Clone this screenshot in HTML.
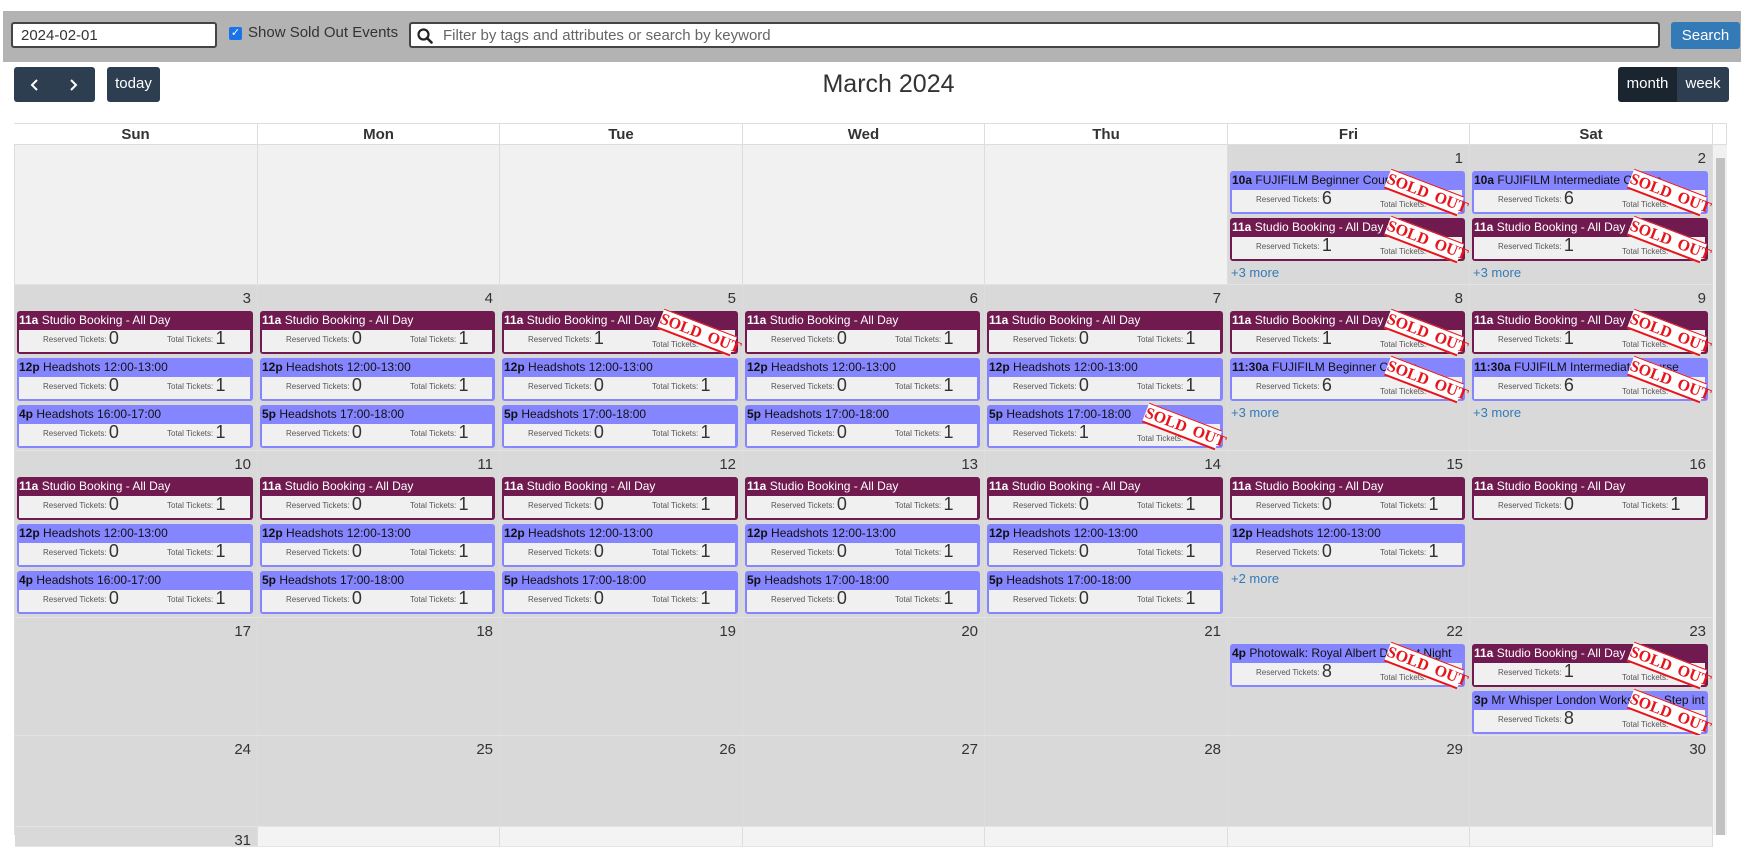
<!DOCTYPE html>
<html><head><meta charset="utf-8"><style>
*{box-sizing:border-box;margin:0;padding:0}
body{width:1741px;height:835px;overflow:hidden;background:#fff;font-family:"Liberation Sans",sans-serif;color:#333;position:relative}
.bar{position:absolute;left:3px;top:11px;width:1738px;height:51px;background:#b3b3b3}
.inp{position:absolute;background:#fff;border:2px solid #444;border-radius:3px;font-size:15px;color:#333}
.btn{position:absolute;background:#2c3e50;color:#fff;border-radius:3px;font-size:15px;text-align:center}
.cell{position:absolute;border-right:1px solid #ddd;border-bottom:1px solid #e4e4e4;overflow:hidden}
.g{background:#d9d9d9}.o{background:#f1f1f1}.w{background:#f3f3f3}
.num{text-align:right;font-size:15px;padding:5px 6px 0 0;height:26px;color:#333}
.ev{position:relative;margin:0 4px 4px 2px;border-radius:3px;padding:0 3px 0 2px;height:43px}
.p{background:#701a4f;color:#fff}.b{background:#8585ff;color:#111}
.t{font-size:12px;height:19px;line-height:19px;white-space:nowrap;overflow:hidden;padding-left:0}
.in{background:#f0f0f0;height:22px;color:#555;font-size:8px;white-space:nowrap;position:relative}
.in .a{position:absolute;left:24px;bottom:3px}
.in .c{position:absolute;left:148px;bottom:3px}
.n{font-size:18px;color:#333;vertical-align:-2px}
.so{position:absolute;right:2px;top:11px;width:78px;height:21px;background:#fff;color:#e8141b;font-family:"Liberation Serif",serif;font-weight:bold;font-size:16px;line-height:20px;text-align:center;transform:rotate(21deg);white-space:nowrap;border-top:1px solid #e8141b;border-bottom:2px solid #e8141b;word-spacing:3px}
.more{font-size:13px;color:#337ab7;padding-left:3px}
.hd{position:absolute;top:123px;height:22px;font-weight:bold;font-size:15px;text-align:center;line-height:21px;border-right:1px solid #ddd;border-top:1px solid #ddd;border-bottom:1px solid #ddd;background:#fff}
</style></head><body>
<div class="bar"></div>
<div class="inp" style="left:11px;top:22px;width:206px;height:26px;padding:2px 8px;line-height:19px">2024-02-01</div>
<div style="position:absolute;left:229px;top:27px;width:13px;height:13px;background:#1a73e8;border-radius:2px;color:#fff;font-size:11px;line-height:13px;text-align:center">✓</div>
<div style="position:absolute;left:248px;top:24px;font-size:15px;color:#333">Show Sold Out Events</div>
<div class="inp" style="left:409px;top:22px;width:1251px;height:26px;padding:2px 0 0 32px;line-height:19px;color:#666">Filter by tags and attributes or search by keyword</div>
<svg style="position:absolute;left:417px;top:28px" width="16" height="16" viewBox="0 0 16 16"><circle cx="6.5" cy="6.5" r="5" fill="none" stroke="#222" stroke-width="2.2"/><path d="M10 10l4.5 4.5" stroke="#222" stroke-width="2.6" stroke-linecap="round"/></svg>
<div style="position:absolute;left:1671px;top:22px;width:69px;height:27px;background:#337ab7;color:#fff;border-radius:3px;font-size:15px;text-align:center;line-height:27px">Search</div>
<div class="btn" style="left:14px;top:67px;width:81px;height:35px;"><svg style="position:absolute;left:16px;top:12px" width="10" height="12" viewBox="0 0 10 12"><path d="M7 1L2 6l5 5" fill="none" stroke="#fff" stroke-width="2"/></svg><svg style="position:absolute;left:54px;top:12px" width="10" height="12" viewBox="0 0 10 12"><path d="M3 1l5 5-5 5" fill="none" stroke="#fff" stroke-width="2"/></svg></div>
<div class="btn" style="left:107px;top:67px;width:53px;height:35px;line-height:34px">today</div>
<div style="position:absolute;left:0;width:1777px;top:70px;text-align:center;font-size:25px;color:#333">March 2024</div>
<div class="btn" style="left:1618px;top:67px;width:59px;height:35px;line-height:34px;background:#1a252f;border-radius:3px 0 0 3px">month</div>
<div class="btn" style="left:1677px;top:67px;width:52px;height:35px;line-height:34px;border-radius:0 3px 3px 0">week</div>
<div style="position:absolute;left:14px;top:123px;width:1px;height:712px;background:#ddd"></div>
<div class="hd" style="left:14px;width:244px">Sun</div>
<div class="hd" style="left:258px;width:242px">Mon</div>
<div class="hd" style="left:500px;width:243px">Tue</div>
<div class="hd" style="left:743px;width:242px">Wed</div>
<div class="hd" style="left:985px;width:243px">Thu</div>
<div class="hd" style="left:1228px;width:242px">Fri</div>
<div class="hd" style="left:1470px;width:243px">Sat</div>
<div style="position:absolute;left:1713px;top:123px;width:14px;height:22px;border:1px solid #ddd;border-left:0"></div>
<div style="position:absolute;left:1713px;top:145px;width:14px;height:690px;background:#f1f1f1"></div>
<div style="position:absolute;left:1716px;top:158px;width:9px;height:677px;background:#c1c1c1"></div>

<!-- Row 1 -->
<div class="cell o" style="left:15px;top:145px;width:243px;height:140px"></div>
<div class="cell o" style="left:258px;top:145px;width:242px;height:140px"></div>
<div class="cell o" style="left:500px;top:145px;width:243px;height:140px"></div>
<div class="cell o" style="left:743px;top:145px;width:242px;height:140px"></div>
<div class="cell o" style="left:985px;top:145px;width:243px;height:140px"></div>
<div class="cell g" style="left:1228px;top:145px;width:242px;height:140px"><div class="num">1</div>
<div class="ev b"><div class="t"><b>10a</b> FUJIFILM Beginner Course</div><div class="in"><span class="a">Reserved Tickets: <span class="n">6</span></span><span class="c">Total Tickets:</span></div><div class="so">SOLD OUT</div></div>
<div class="ev p"><div class="t"><b>11a</b> Studio Booking - All Day</div><div class="in"><span class="a">Reserved Tickets: <span class="n">1</span></span><span class="c">Total Tickets:</span></div><div class="so">SOLD OUT</div></div>
<div class="more">+3 more</div></div>
<div class="cell g" style="left:1470px;top:145px;width:243px;height:140px"><div class="num">2</div>
<div class="ev b"><div class="t"><b>10a</b> FUJIFILM Intermediate Course</div><div class="in"><span class="a">Reserved Tickets: <span class="n">6</span></span><span class="c">Total Tickets:</span></div><div class="so">SOLD OUT</div></div>
<div class="ev p"><div class="t"><b>11a</b> Studio Booking - All Day</div><div class="in"><span class="a">Reserved Tickets: <span class="n">1</span></span><span class="c">Total Tickets:</span></div><div class="so">SOLD OUT</div></div>
<div class="more">+3 more</div></div>

<!-- Row 2 -->
<div class="cell g" style="left:15px;top:285px;width:243px;height:166px"><div class="num">3</div>
<div class="ev p"><div class="t"><b>11a</b> Studio Booking - All Day</div><div class="in"><span class="a">Reserved Tickets: <span class="n">0</span></span><span class="c">Total Tickets: <span class="n">1</span></span></div></div>
<div class="ev b"><div class="t"><b>12p</b> Headshots 12:00-13:00</div><div class="in"><span class="a">Reserved Tickets: <span class="n">0</span></span><span class="c">Total Tickets: <span class="n">1</span></span></div></div>
<div class="ev b"><div class="t"><b>4p</b> Headshots 16:00-17:00</div><div class="in"><span class="a">Reserved Tickets: <span class="n">0</span></span><span class="c">Total Tickets: <span class="n">1</span></span></div></div></div>
<div class="cell g" style="left:258px;top:285px;width:242px;height:166px"><div class="num">4</div>
<div class="ev p"><div class="t"><b>11a</b> Studio Booking - All Day</div><div class="in"><span class="a">Reserved Tickets: <span class="n">0</span></span><span class="c">Total Tickets: <span class="n">1</span></span></div></div>
<div class="ev b"><div class="t"><b>12p</b> Headshots 12:00-13:00</div><div class="in"><span class="a">Reserved Tickets: <span class="n">0</span></span><span class="c">Total Tickets: <span class="n">1</span></span></div></div>
<div class="ev b"><div class="t"><b>5p</b> Headshots 17:00-18:00</div><div class="in"><span class="a">Reserved Tickets: <span class="n">0</span></span><span class="c">Total Tickets: <span class="n">1</span></span></div></div></div>
<div class="cell g" style="left:500px;top:285px;width:243px;height:166px"><div class="num">5</div>
<div class="ev p"><div class="t"><b>11a</b> Studio Booking - All Day</div><div class="in"><span class="a">Reserved Tickets: <span class="n">1</span></span><span class="c">Total Tickets:</span></div><div class="so">SOLD OUT</div></div>
<div class="ev b"><div class="t"><b>12p</b> Headshots 12:00-13:00</div><div class="in"><span class="a">Reserved Tickets: <span class="n">0</span></span><span class="c">Total Tickets: <span class="n">1</span></span></div></div>
<div class="ev b"><div class="t"><b>5p</b> Headshots 17:00-18:00</div><div class="in"><span class="a">Reserved Tickets: <span class="n">0</span></span><span class="c">Total Tickets: <span class="n">1</span></span></div></div></div>
<div class="cell g" style="left:743px;top:285px;width:242px;height:166px"><div class="num">6</div>
<div class="ev p"><div class="t"><b>11a</b> Studio Booking - All Day</div><div class="in"><span class="a">Reserved Tickets: <span class="n">0</span></span><span class="c">Total Tickets: <span class="n">1</span></span></div></div>
<div class="ev b"><div class="t"><b>12p</b> Headshots 12:00-13:00</div><div class="in"><span class="a">Reserved Tickets: <span class="n">0</span></span><span class="c">Total Tickets: <span class="n">1</span></span></div></div>
<div class="ev b"><div class="t"><b>5p</b> Headshots 17:00-18:00</div><div class="in"><span class="a">Reserved Tickets: <span class="n">0</span></span><span class="c">Total Tickets: <span class="n">1</span></span></div></div></div>
<div class="cell g" style="left:985px;top:285px;width:243px;height:166px"><div class="num">7</div>
<div class="ev p"><div class="t"><b>11a</b> Studio Booking - All Day</div><div class="in"><span class="a">Reserved Tickets: <span class="n">0</span></span><span class="c">Total Tickets: <span class="n">1</span></span></div></div>
<div class="ev b"><div class="t"><b>12p</b> Headshots 12:00-13:00</div><div class="in"><span class="a">Reserved Tickets: <span class="n">0</span></span><span class="c">Total Tickets: <span class="n">1</span></span></div></div>
<div class="ev b"><div class="t"><b>5p</b> Headshots 17:00-18:00</div><div class="in"><span class="a">Reserved Tickets: <span class="n">1</span></span><span class="c">Total Tickets:</span></div><div class="so">SOLD OUT</div></div></div>
<div class="cell g" style="left:1228px;top:285px;width:242px;height:166px"><div class="num">8</div>
<div class="ev p"><div class="t"><b>11a</b> Studio Booking - All Day</div><div class="in"><span class="a">Reserved Tickets: <span class="n">1</span></span><span class="c">Total Tickets:</span></div><div class="so">SOLD OUT</div></div>
<div class="ev b"><div class="t"><b>11:30a</b> FUJIFILM Beginner Course</div><div class="in"><span class="a">Reserved Tickets: <span class="n">6</span></span><span class="c">Total Tickets:</span></div><div class="so">SOLD OUT</div></div>
<div class="more">+3 more</div></div>
<div class="cell g" style="left:1470px;top:285px;width:243px;height:166px"><div class="num">9</div>
<div class="ev p"><div class="t"><b>11a</b> Studio Booking - All Day</div><div class="in"><span class="a">Reserved Tickets: <span class="n">1</span></span><span class="c">Total Tickets:</span></div><div class="so">SOLD OUT</div></div>
<div class="ev b"><div class="t"><b>11:30a</b> FUJIFILM Intermediate Course</div><div class="in"><span class="a">Reserved Tickets: <span class="n">6</span></span><span class="c">Total Tickets:</span></div><div class="so">SOLD OUT</div></div>
<div class="more">+3 more</div></div>

<!-- Row 3 -->
<div class="cell g" style="left:15px;top:451px;width:243px;height:167px"><div class="num">10</div>
<div class="ev p"><div class="t"><b>11a</b> Studio Booking - All Day</div><div class="in"><span class="a">Reserved Tickets: <span class="n">0</span></span><span class="c">Total Tickets: <span class="n">1</span></span></div></div>
<div class="ev b"><div class="t"><b>12p</b> Headshots 12:00-13:00</div><div class="in"><span class="a">Reserved Tickets: <span class="n">0</span></span><span class="c">Total Tickets: <span class="n">1</span></span></div></div>
<div class="ev b"><div class="t"><b>4p</b> Headshots 16:00-17:00</div><div class="in"><span class="a">Reserved Tickets: <span class="n">0</span></span><span class="c">Total Tickets: <span class="n">1</span></span></div></div></div>
<div class="cell g" style="left:258px;top:451px;width:242px;height:167px"><div class="num">11</div>
<div class="ev p"><div class="t"><b>11a</b> Studio Booking - All Day</div><div class="in"><span class="a">Reserved Tickets: <span class="n">0</span></span><span class="c">Total Tickets: <span class="n">1</span></span></div></div>
<div class="ev b"><div class="t"><b>12p</b> Headshots 12:00-13:00</div><div class="in"><span class="a">Reserved Tickets: <span class="n">0</span></span><span class="c">Total Tickets: <span class="n">1</span></span></div></div>
<div class="ev b"><div class="t"><b>5p</b> Headshots 17:00-18:00</div><div class="in"><span class="a">Reserved Tickets: <span class="n">0</span></span><span class="c">Total Tickets: <span class="n">1</span></span></div></div></div>
<div class="cell g" style="left:500px;top:451px;width:243px;height:167px"><div class="num">12</div>
<div class="ev p"><div class="t"><b>11a</b> Studio Booking - All Day</div><div class="in"><span class="a">Reserved Tickets: <span class="n">0</span></span><span class="c">Total Tickets: <span class="n">1</span></span></div></div>
<div class="ev b"><div class="t"><b>12p</b> Headshots 12:00-13:00</div><div class="in"><span class="a">Reserved Tickets: <span class="n">0</span></span><span class="c">Total Tickets: <span class="n">1</span></span></div></div>
<div class="ev b"><div class="t"><b>5p</b> Headshots 17:00-18:00</div><div class="in"><span class="a">Reserved Tickets: <span class="n">0</span></span><span class="c">Total Tickets: <span class="n">1</span></span></div></div></div>
<div class="cell g" style="left:743px;top:451px;width:242px;height:167px"><div class="num">13</div>
<div class="ev p"><div class="t"><b>11a</b> Studio Booking - All Day</div><div class="in"><span class="a">Reserved Tickets: <span class="n">0</span></span><span class="c">Total Tickets: <span class="n">1</span></span></div></div>
<div class="ev b"><div class="t"><b>12p</b> Headshots 12:00-13:00</div><div class="in"><span class="a">Reserved Tickets: <span class="n">0</span></span><span class="c">Total Tickets: <span class="n">1</span></span></div></div>
<div class="ev b"><div class="t"><b>5p</b> Headshots 17:00-18:00</div><div class="in"><span class="a">Reserved Tickets: <span class="n">0</span></span><span class="c">Total Tickets: <span class="n">1</span></span></div></div></div>
<div class="cell g" style="left:985px;top:451px;width:243px;height:167px"><div class="num">14</div>
<div class="ev p"><div class="t"><b>11a</b> Studio Booking - All Day</div><div class="in"><span class="a">Reserved Tickets: <span class="n">0</span></span><span class="c">Total Tickets: <span class="n">1</span></span></div></div>
<div class="ev b"><div class="t"><b>12p</b> Headshots 12:00-13:00</div><div class="in"><span class="a">Reserved Tickets: <span class="n">0</span></span><span class="c">Total Tickets: <span class="n">1</span></span></div></div>
<div class="ev b"><div class="t"><b>5p</b> Headshots 17:00-18:00</div><div class="in"><span class="a">Reserved Tickets: <span class="n">0</span></span><span class="c">Total Tickets: <span class="n">1</span></span></div></div></div>
<div class="cell g" style="left:1228px;top:451px;width:242px;height:167px"><div class="num">15</div>
<div class="ev p"><div class="t"><b>11a</b> Studio Booking - All Day</div><div class="in"><span class="a">Reserved Tickets: <span class="n">0</span></span><span class="c">Total Tickets: <span class="n">1</span></span></div></div>
<div class="ev b"><div class="t"><b>12p</b> Headshots 12:00-13:00</div><div class="in"><span class="a">Reserved Tickets: <span class="n">0</span></span><span class="c">Total Tickets: <span class="n">1</span></span></div></div>
<div class="more">+2 more</div></div>
<div class="cell g" style="left:1470px;top:451px;width:243px;height:167px"><div class="num">16</div>
<div class="ev p"><div class="t"><b>11a</b> Studio Booking - All Day</div><div class="in"><span class="a">Reserved Tickets: <span class="n">0</span></span><span class="c">Total Tickets: <span class="n">1</span></span></div></div></div>

<!-- Row 4 -->
<div class="cell g" style="left:15px;top:618px;width:243px;height:118px"><div class="num">17</div></div>
<div class="cell g" style="left:258px;top:618px;width:242px;height:118px"><div class="num">18</div></div>
<div class="cell g" style="left:500px;top:618px;width:243px;height:118px"><div class="num">19</div></div>
<div class="cell g" style="left:743px;top:618px;width:242px;height:118px"><div class="num">20</div></div>
<div class="cell g" style="left:985px;top:618px;width:243px;height:118px"><div class="num">21</div></div>
<div class="cell g" style="left:1228px;top:618px;width:242px;height:118px"><div class="num">22</div>
<div class="ev b"><div class="t"><b>4p</b> Photowalk: Royal Albert Dock at Night</div><div class="in"><span class="a">Reserved Tickets: <span class="n">8</span></span><span class="c">Total Tickets:</span></div><div class="so">SOLD OUT</div></div></div>
<div class="cell g" style="left:1470px;top:618px;width:243px;height:118px"><div class="num">23</div>
<div class="ev p"><div class="t"><b>11a</b> Studio Booking - All Day</div><div class="in"><span class="a">Reserved Tickets: <span class="n">1</span></span><span class="c">Total Tickets:</span></div><div class="so">SOLD OUT</div></div>
<div class="ev b"><div class="t"><b>3p</b> Mr Whisper London Workshop - Step into</div><div class="in"><span class="a">Reserved Tickets: <span class="n">8</span></span><span class="c">Total Tickets:</span></div><div class="so">SOLD OUT</div></div></div>

<!-- Row 5 -->
<div class="cell g" style="left:15px;top:736px;width:243px;height:91px"><div class="num">24</div></div>
<div class="cell g" style="left:258px;top:736px;width:242px;height:91px"><div class="num">25</div></div>
<div class="cell g" style="left:500px;top:736px;width:243px;height:91px"><div class="num">26</div></div>
<div class="cell g" style="left:743px;top:736px;width:242px;height:91px"><div class="num">27</div></div>
<div class="cell g" style="left:985px;top:736px;width:243px;height:91px"><div class="num">28</div></div>
<div class="cell g" style="left:1228px;top:736px;width:242px;height:91px"><div class="num">29</div></div>
<div class="cell g" style="left:1470px;top:736px;width:243px;height:91px"><div class="num">30</div></div>

<!-- Row 6 -->
<div class="cell g" style="left:15px;top:827px;width:243px;height:20px"><div class="num">31</div></div>
<div class="cell w" style="left:258px;top:827px;width:242px;height:20px"></div>
<div class="cell w" style="left:500px;top:827px;width:243px;height:20px"></div>
<div class="cell w" style="left:743px;top:827px;width:242px;height:20px"></div>
<div class="cell w" style="left:985px;top:827px;width:243px;height:20px"></div>
<div class="cell w" style="left:1228px;top:827px;width:242px;height:20px"></div>
<div class="cell w" style="left:1470px;top:827px;width:243px;height:20px"></div>
</body></html>
